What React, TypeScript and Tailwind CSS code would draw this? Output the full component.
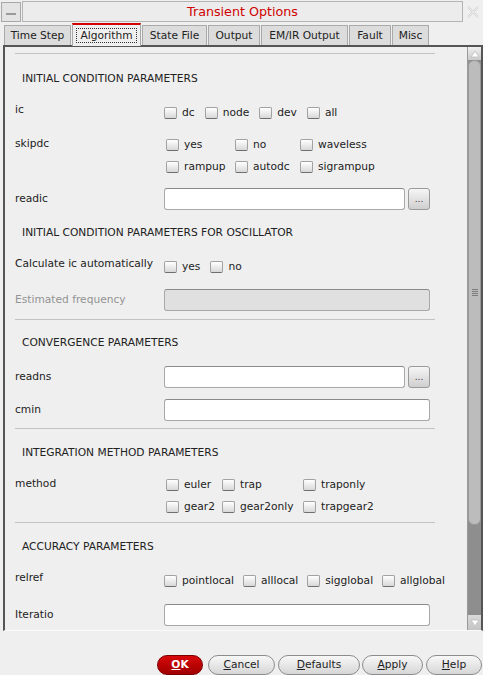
import React from 'react'

type Opt = { label: string }

function Check({ label }: Opt) {
  return (
    <span className="flex items-center gap-[5px] h-[16px]">
      <span className="inline-block w-[13px] h-[12px] rounded-[2px] border border-[#a2a2a2] border-b-[#6e6e6e] bg-linear-to-b from-white to-[#d8d8d8]" />
      <span>{label}</span>
    </span>
  )
}

function Sep({ mt }: { mt: string }) {
  return <div className={`${mt} ml-[10px] w-[420px] h-px bg-[#c2c2c2]`} />
}

function Header({ children, mt }: { children: React.ReactNode; mt: string }) {
  return <div className={`${mt} pl-[17px] leading-[16px] h-[16px]`}>{children}</div>
}

function Input({ w, disabled }: { w: string; disabled?: boolean }) {
  return (
    <div
      className={`${w} h-[22px] rounded-[3px] border border-[#a8a8a8] border-t-[#8a8a8a] ${
        disabled ? 'bg-[#e0e0e0]' : 'bg-white'
      }`}
    />
  )
}

function Dots() {
  return (
    <div className="ml-[3px] w-[22px] h-[22px] rounded-[3px] border border-[#9a9a9a] bg-linear-to-b from-[#f6f6f6] to-[#cfcfcf] flex items-end justify-center pb-[5px] text-[9px] leading-none text-[#333]">
      ...
    </div>
  )
}

function Btn({ children, w, ml, primary }: { children: React.ReactNode; w: string; ml: string; primary?: boolean }) {
  return (
    <div
      className={`${w} ${ml} h-[20px] rounded-full flex items-center justify-center border ${
        primary
          ? 'border-[#7a0000] bg-linear-to-b from-[#d80808] to-[#a00000] text-white font-bold'
          : 'border-[#8c8c8c] bg-linear-to-b from-[#f8f8f8] to-[#d6d6d6] text-[#1e1e1e]'
      }`}
    >
      {children}
    </div>
  )
}

const TABS = ['Time Step', 'Algorithm', 'State File', 'Output', 'EM/IR Output', 'Fault', 'Misc']

export default function App() {
  return (
    <div className="w-[483px] h-[675px] overflow-hidden bg-[#efefef] flex flex-col font-['DejaVu_Sans',sans-serif] text-[10.67px] text-[#222]">
      {/* title bar */}
      <div className="h-[23px] flex items-stretch pt-[1px] px-[1px] gap-[1px]">
        <div className="w-[20px] h-[20px] mt-[1px] border border-[#a8a8a8] bg-[#e4e4e4] flex items-end pb-[6px] pl-[4px]">
          <div className="w-[10px] h-[2px] bg-[#9a9a9a]" />
        </div>
        <div className="flex-1 h-[21px] border border-[#b4b4b4] bg-[#ececec] flex items-center justify-center text-[12.7px] text-[#d00000]">
          Transient Options
        </div>
        <div className="w-[18px] h-[21px] flex items-center justify-center">
          <svg width="14" height="14" viewBox="0 0 14 14">
            <path d="M2 2 L12 12 M12 2 L2 12" stroke="#d4d4d4" strokeWidth="2.2" />
            <path d="M2 2 L12 12 M12 2 L2 12" stroke="#f4f4f4" strokeWidth="0.8" />
          </svg>
        </div>
      </div>

      {/* tabs */}
      <div className="h-[22px] flex items-end pl-[4px] gap-[1px]">
        {TABS.map(t =>
          t === 'Algorithm' ? (
            <div key={t} className="relative w-[69px] h-[23px] bg-[#efefef] border-x border-[#a8a8a8] border-t-2 border-t-[#d40000] flex items-center justify-center z-10 -mb-[1px]">
              <span className="px-[3px] leading-[13px] border border-dotted border-[#333]">{t}</span>
            </div>
          ) : (
            <div
              key={t}
              className={`h-[20px] bg-[#dcdcdc] border border-b-0 border-[#aaaaaa] flex items-center justify-center ${
                t === 'Time Step' ? 'w-[67px]' : t === 'State File' ? 'w-[65px]' : t === 'Output' ? 'w-[52px]' : t === 'EM/IR Output' ? 'w-[87px]' : t === 'Fault' ? 'w-[42px]' : 'w-[37px]'
              }`}
            >
              {t}
            </div>
          )
        )}
      </div>

      {/* panel */}
      <div className="ml-[3px] h-[586px] flex border-t-2 border-l-2 border-r-2 border-[#555] border-b border-b-[#fafafa]">
        <div className="flex-1 overflow-hidden flex flex-col">
          <Sep mt="mt-[6px]" />
          <Header mt="mt-[17px]">INITIAL CONDITION PARAMETERS</Header>

          <div className="mt-[15px] flex pl-[10px]">
            <div className="w-[149px] leading-[16px]">ic</div>
            <div className="pt-[3px] flex gap-[10px]">
              <Check label="dc" />
              <Check label="node" />
              <Check label="dev" />
              <Check label="all" />
            </div>
          </div>

          <div className="mt-[15px] flex pl-[10px]">
            <div className="w-[149px] leading-[16px]">skipdc</div>
            <div className="pt-[1px] ml-[2px] grid grid-cols-[69px_65px_auto] gap-y-[6px]">
              <Check label="yes" />
              <Check label="no" />
              <Check label="waveless" />
              <Check label="rampup" />
              <Check label="autodc" />
              <Check label="sigrampup" />
            </div>
          </div>

          <div className="mt-[13px] flex items-center pl-[10px]">
            <div className="w-[149px]">readic</div>
            <Input w="w-[241px]" />
            <Dots />
          </div>

          <Header mt="mt-[15px]">INITIAL CONDITION PARAMETERS FOR OSCILLATOR</Header>

          <div className="mt-[15px] flex pl-[10px]">
            <div className="w-[149px] leading-[16px]">Calculate ic automatically</div>
            <div className="pt-[3px] flex gap-[10px]">
              <Check label="yes" />
              <Check label="no" />
            </div>
          </div>

          <div className="mt-[14px] flex items-center pl-[10px]">
            <div className="w-[149px] text-[#939393]">Estimated frequency</div>
            <Input w="w-[266px]" disabled />
          </div>

          <Sep mt="mt-[8px]" />
          <Header mt="mt-[15px]">CONVERGENCE PARAMETERS</Header>

          <div className="mt-[15px] flex items-center pl-[10px]">
            <div className="w-[149px]">readns</div>
            <Input w="w-[241px]" />
            <Dots />
          </div>

          <div className="mt-[11px] flex items-center pl-[10px]">
            <div className="w-[149px]">cmin</div>
            <Input w="w-[266px]" />
          </div>

          <Sep mt="mt-[7px]" />
          <Header mt="mt-[16px]">INTEGRATION METHOD PARAMETERS</Header>

          <div className="mt-[15px] flex pl-[10px]">
            <div className="w-[149px] leading-[16px]">method</div>
            <div className="pt-[1px] ml-[2px] grid grid-cols-[56px_81px_auto] gap-y-[6px]">
              <Check label="euler" />
              <Check label="trap" />
              <Check label="traponly" />
              <Check label="gear2" />
              <Check label="gear2only" />
              <Check label="trapgear2" />
            </div>
          </div>

          <Sep mt="mt-[7px]" />
          <Header mt="mt-[16px]">ACCURACY PARAMETERS</Header>

          <div className="mt-[15px] flex pl-[10px]">
            <div className="w-[149px] leading-[16px]">relref</div>
            <div className="pt-[3px] flex gap-[9px]">
              <Check label="pointlocal" />
              <Check label="alllocal" />
              <Check label="sigglobal" />
              <Check label="allglobal" />
            </div>
          </div>

          <div className="mt-[15px] flex items-center pl-[10px] shrink-0">
            <div className="w-[149px]">Iteratio</div>
            <Input w="w-[266px]" />
          </div>
        </div>

        {/* scrollbar */}
        <div className="w-[14px] flex flex-col bg-[#8e8e8e] border-l border-[#9a9a9a]">
          <div className="h-[13px] bg-linear-to-b from-[#f0f0f0] to-[#cacaca] flex items-center justify-center">
            <svg width="10" height="8" viewBox="0 0 10 8"><path d="M5 1 L9 7 L1 7 Z" fill="#ffffff" stroke="#bdbdbd" strokeWidth="0.8" /></svg>
          </div>
          <div className="h-[465px] rounded-[6px] bg-[#bcbcbc] border border-[#999] flex items-center justify-center">
            <div className="flex flex-col gap-[1px]">
              <div className="w-[6px] h-px bg-[#7c7c7c]" />
              <div className="w-[6px] h-px bg-[#7c7c7c]" />
              <div className="w-[6px] h-px bg-[#7c7c7c]" />
              <div className="w-[6px] h-px bg-[#7c7c7c]" />
            </div>
          </div>
          <div className="flex-1" />
          <div className="h-[15px] bg-linear-to-b from-[#dadada] to-[#c4c4c4] flex items-center justify-center">
            <svg width="10" height="8" viewBox="0 0 10 8"><path d="M1 1 L9 1 L5 7 Z" fill="#ffffff" stroke="#bdbdbd" strokeWidth="0.8" /></svg>
          </div>
        </div>
      </div>

      {/* buttons */}
      <div className="flex pt-[24px]">
        <Btn w="w-[46px]" ml="ml-[157px]" primary><span className="underline">O</span>K</Btn>
        <Btn w="w-[67px]" ml="ml-[5px]"><span className="underline">C</span>ancel</Btn>
        <Btn w="w-[82px]" ml="ml-[3px]"><span className="underline">D</span>efaults</Btn>
        <Btn w="w-[61px]" ml="ml-[2px]"><span className="underline">A</span>pply</Btn>
        <Btn w="w-[56px]" ml="ml-[3px]"><span className="underline">H</span>elp</Btn>
      </div>
    </div>
  )
}
